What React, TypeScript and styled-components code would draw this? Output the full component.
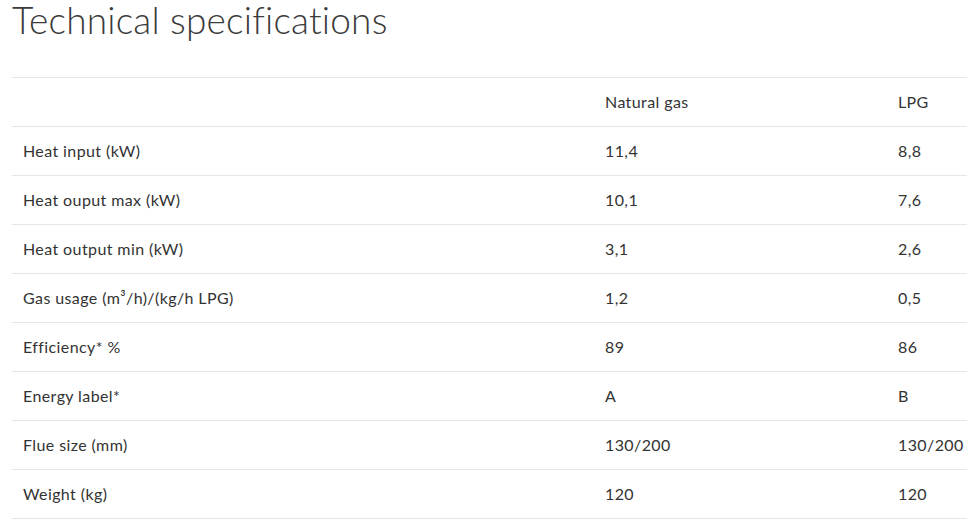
import React from "react";
import styled, { createGlobalStyle } from "styled-components";

const Global = createGlobalStyle`
  html, body { margin: 0; padding: 0; background: #fff; overflow: hidden; }
  body { font-family: Lato, "Noto Sans", sans-serif; color: #333; }
`;

const Page = styled.div`
  padding: 0 0 0 12px;
  width: 967px;
  box-sizing: border-box;
  overflow: hidden;
`;

const Title = styled.h1`
  margin: 0;
  padding-top: 1px;
  font-family: Lato, "Noto Sans", sans-serif;
  font-weight: 300;
  font-size: 37px;
  line-height: 38px;
  color: #3a3a3a;
  letter-spacing: 0.2px;
`;

const Table = styled.div`
  margin-top: 38px;
  width: 968px;
  border-top: 1px solid #e6e6e6;
`;

const Row = styled.div`
  display: grid;
  grid-template-columns: 582px 293px 1fr;
  height: 48px;
  align-items: center;
  border-bottom: 1px solid #e6e6e6;
`;

const Cell = styled.div`
  padding: 0 0 0 11px;
  font-size: 16px;
  line-height: 20px;
  letter-spacing: 0.4px;
  color: #333;
  white-space: nowrap;
`;

const rows: [React.ReactNode, string, string][] = [
  ["Heat input (kW)", "11,4", "8,8"],
  ["Heat ouput max (kW)", "10,1", "7,6"],
  ["Heat output min (kW)", "3,1", "2,6"],
  ["Gas usage (m³/h)/(kg/h LPG)", "1,2", "0,5"],
  ["Efficiency* %", "89", "86"],
  ["Energy label*", "A", "B"],
  ["Flue size (mm)", "130/200", "130/200"],
  ["Weight (kg)", "120", "120"],
];

export default function App() {
  return (
    <Page>
      <Global />
      <Title>Technical specifications</Title>
      <Table>
        <Row>
          <Cell />
          <Cell>Natural gas</Cell>
          <Cell>LPG</Cell>
        </Row>
        {rows.map(([a, b, c], i) => (
          <Row key={i}>
            <Cell>{a}</Cell>
            <Cell>{b}</Cell>
            <Cell>{c}</Cell>
          </Row>
        ))}
      </Table>
    </Page>
  );
}
